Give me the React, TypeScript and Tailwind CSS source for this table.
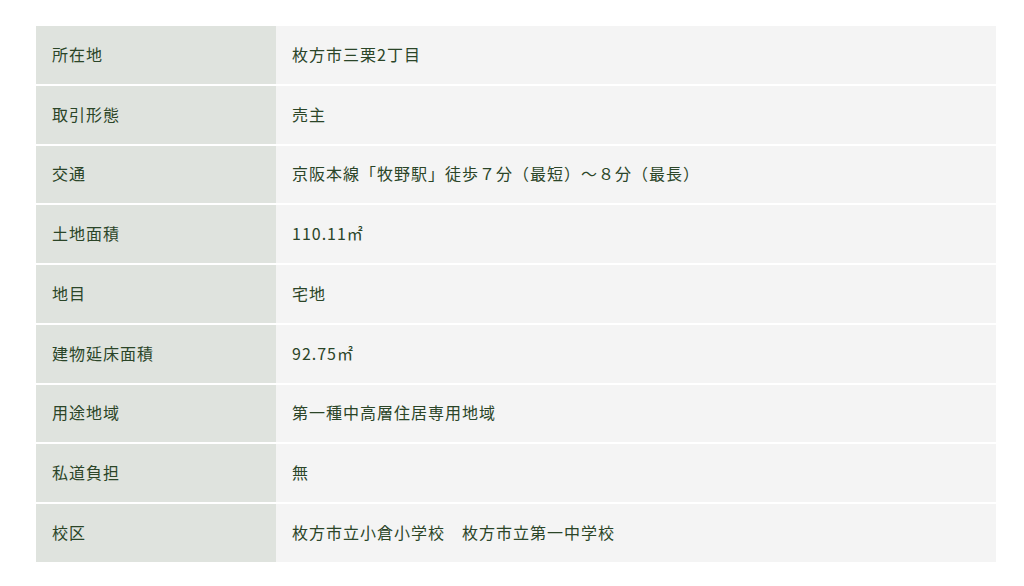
import React from "react";

const rows: [string, string][] = [
  ["所在地", "枚方市三栗2丁目"],
  ["取引形態", "売主"],
  ["交通", "京阪本線「牧野駅」徒歩７分（最短）～８分（最長）"],
  ["土地面積", "110.11㎡"],
  ["地目", "宅地"],
  ["建物延床面積", "92.75㎡"],
  ["用途地域", "第一種中高層住居専用地域"],
  ["私道負担", "無"],
  ["校区", "枚方市立小倉小学校　枚方市立第一中学校"],
];

export default function App() {
  return (
    <div
      className="w-[1024px] h-[586px] bg-white pt-[26px] pl-[36px]"
      style={{ fontFamily: '"Noto Sans CJK JP", "Noto Sans", sans-serif' }}
    >
      <div className="w-[960px] flex flex-col gap-[2px]">
        {rows.map(([k, v]) => (
          <div key={k} className="flex h-[57.75px]">
            <div className="w-[240px] shrink-0 bg-[#dfe3de] flex items-center pl-[16px] pb-[2px] text-[16px] tracking-[1px] text-[#2b4528]">
              {k}
            </div>
            <div className="flex-1 bg-[#f4f4f4] flex items-center pl-[16px] pb-[2px] text-[16px] tracking-[1px] text-[#2b4528]">
              {v}
            </div>
          </div>
        ))}
      </div>
    </div>
  );
}
